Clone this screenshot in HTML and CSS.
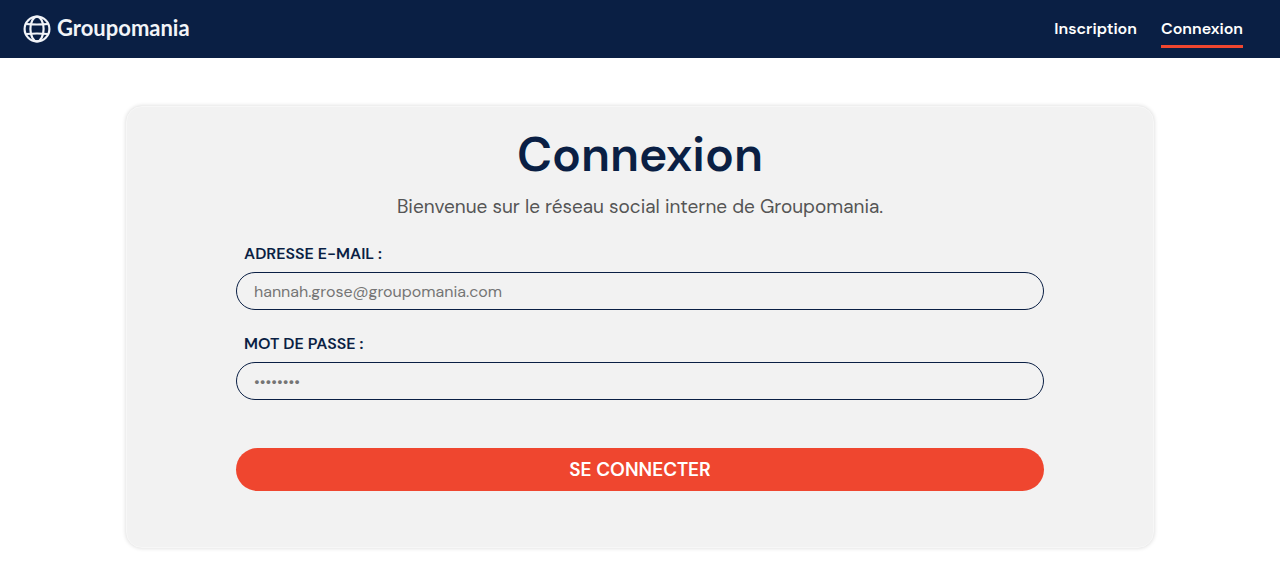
FILE: index.html
```html
<!DOCTYPE html>
<html lang="fr">
<head>
<meta charset="utf-8">
<meta name="viewport" content="width=device-width, initial-scale=1">
<title>Groupomania - Connexion</title>
<link rel="stylesheet" href="styles.css">
</head>
<body>
<header class="header">
  <a class="brand" href="#">
    <svg class="brand-icon" viewBox="0 0 28 28" fill="none" stroke="currentColor" stroke-width="2.2" aria-hidden="true">
      <circle cx="14" cy="14" r="12.4"/>
      <ellipse cx="14" cy="14" rx="6.6" ry="12.4"/>
      <path d="M3.2 9Q14 10 24.8 9M3.2 19Q14 18 24.8 19"/>
    </svg>
    <span class="brand-name">Groupomania</span>
  </a>
  <nav class="nav">
    <a class="nav-link" href="#">Inscription</a>
    <a class="nav-link active" href="#" aria-current="page">Connexion</a>
  </nav>
</header>
<main class="card">
  <h1 class="title">Connexion</h1>
  <p class="intro">Bienvenue sur le réseau social interne de Groupomania.</p>
  <form class="form">
    <div class="field">
      <label class="label" for="email">Adresse e-mail :</label>
      <input class="input" id="email" type="email" placeholder="hannah.grose@groupomania.com">
    </div>
    <div class="field">
      <label class="label" for="password">Mot de passe :</label>
      <input class="input" id="password" type="password" placeholder="••••••••">
    </div>
    <button class="submit" type="submit">Se connecter</button>
  </form>
</main>
</body>
</html>
```
FILE: styles.css
```css
* {
  box-sizing: border-box;
}

body {
  margin: 0;
  background: #fff;
  color: #0a1f44;
  font-family: "DM Sans", Inter, sans-serif;
  font-size: 16px;
}

.header {
  display: flex;
  align-items: center;
  justify-content: space-between;
  min-height: 58px;
  padding: 0 37px 0 23px;
  background: #0a1f44;
}

.brand {
  display: flex;
  align-items: center;
  gap: 6px;
  color: #f2f4f8;
  text-decoration: none;
}

.brand-icon {
  width: 28px;
  height: 28px;
}

.brand-name {
  padding-bottom: 3px;
  font-family: Lato, sans-serif;
  font-size: 22px;
  font-weight: 700;
  line-height: 28px;
}

.nav {
  display: flex;
  gap: 24px;
}

.nav-link {
  padding: 8px 0 6px;
  border-bottom: 3px solid transparent;
  color: #fff;
  font-size: 16px;
  font-weight: 600;
  line-height: 20px;
  text-decoration: none;
}

.nav-link.active {
  border-color: #ef462f;
}

.card {
  width: calc(80% + 4px);
  margin: 48px auto;
  padding: 24px 109px 56px;
  border: 1px solid #f7f7f7;
  border-radius: 16px;
  background: #f2f2f2;
  box-shadow: 0 0 4px rgba(0, 0, 0, 0.16);
}

.title {
  margin: 0;
  font-size: 48px;
  font-weight: 600;
  line-height: 48px;
  text-align: center;
}

.intro {
  margin: 16px 0 25px;
  color: #555;
  font-size: 19px;
  line-height: 24px;
  text-align: center;
}

.field {
  display: flex;
  flex-direction: column;
  gap: 8px;
  margin-bottom: 24px;
}

.label {
  padding-left: 8px;
  font-size: 16px;
  font-weight: 600;
  line-height: 20px;
  text-transform: uppercase;
}

.input {
  width: 100%;
  height: 38px;
  padding: 0 17px;
  border: 1px solid #0a1f44;
  border-radius: 20px;
  background: transparent;
  color: #0a1f44;
  font-family: inherit;
  font-size: 16px;
}

.input::placeholder {
  color: #757575;
  opacity: 1;
}

.submit {
  width: 100%;
  height: 43px;
  margin-top: 24px;
  border: 0;
  border-radius: 22px;
  background: #ef462f;
  color: #fff;
  font-family: inherit;
  font-size: 19px;
  font-weight: 600;
  text-transform: uppercase;
  cursor: pointer;
}
```
